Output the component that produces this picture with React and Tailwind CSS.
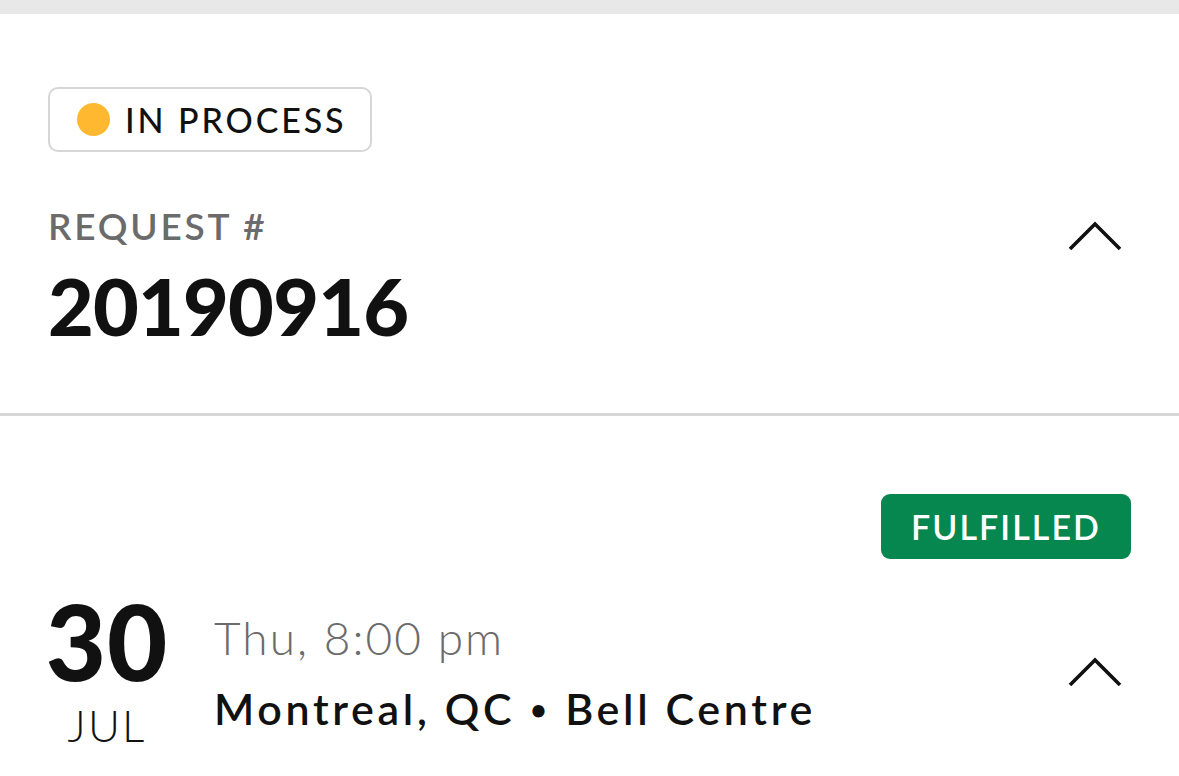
const FONT = { fontFamily: 'Lato, "Noto Sans", sans-serif' };

function Chevron() {
  return (
    <svg width="54" height="30" viewBox="0 0 54 30" fill="none">
      <path d="M2 28 L27 3 L52 28" stroke="#111" strokeWidth="3.6" />
    </svg>
  );
}

export default function App() {
  return (
    <div className="w-[1179px] h-[776px] overflow-hidden bg-white text-[#111]" style={FONT}>
      <div className="h-[14px] bg-[#e8e8e8]" />

      <section className="px-[48px] pt-[73px] pb-[68px] border-b-[3px] border-[#d6d6d6]">
        <div className="inline-flex items-center h-[65px] pl-[27px] pr-[24px] gap-[15px] border-2 border-[#d6d6d6] rounded-[10px]">
          <span className="w-[33px] h-[33px] rounded-full bg-[#ffb830]" />
          <span className="text-[34px] font-medium tracking-[0.085em] leading-none">IN PROCESS</span>
        </div>
        <div className="flex items-start justify-between mt-[55px]">
          <div>
            <div className="text-[37px] font-semibold tracking-[0.075em] text-[#6b6b6b] leading-none">REQUEST #</div>
            <div className="text-[79px] font-black leading-none mt-[22px] tracking-[-0.01em]">20190916</div>
          </div>
          <div className="mr-[9px] mt-[14px]"><Chevron /></div>
        </div>
      </section>

      <section className="px-[48px] pt-[78px]">
        <div className="flex justify-end">
          <span className="h-[65px] w-[250px] flex items-center justify-center bg-[#05874f] text-white rounded-[9px] text-[34px] font-semibold tracking-[0.06em] leading-none">
            FULFILLED
          </span>
        </div>
        <div className="flex items-start mt-[30px]">
          <div className="w-[118px] flex flex-col items-center">
            <div className="text-[104px] font-black leading-none tracking-[0.01em]">30</div>
            <div className="text-[44px] font-light leading-none mt-[10px] tracking-[0.05em]">JUL</div>
          </div>
          <div className="ml-[48px] flex-1 mt-[26px]">
            <div className="text-[46px] text-[#6b6b6b] font-light leading-none tracking-[0.045em]">Thu, 8:00 pm</div>
            <div className="text-[43px] font-semibold leading-none mt-[26px] tracking-[0.085em]">
              Montreal, QC <span className="text-[30px] align-[0.12em]">•</span> Bell Centre
            </div>
          </div>
          <div className="mr-[9px] mt-[68px]"><Chevron /></div>
        </div>
      </section>
    </div>
  );
}
